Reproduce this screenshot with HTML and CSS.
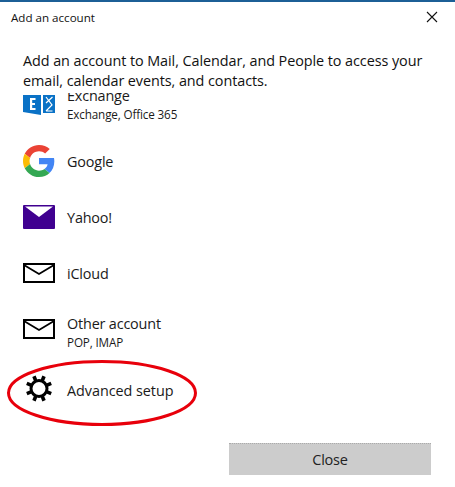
FILE: index.html
```html
<!DOCTYPE html>
<html lang="en">
<head>
<meta charset="utf-8">
<title>Add an account</title>
<link rel="stylesheet" href="styles.css">
</head>
<body>
<div class="dialog">
  <header class="titlebar">
    <span class="title">Add an account</span>
    <svg class="close-x" width="12" height="12" viewBox="0 0 12 12"><path d="M1 1l10 10M11 1L1 11" stroke="#111" stroke-width="1.1" fill="none"/></svg>
  </header>
  <p class="intro">Add an account to Mail, Calendar, and People to access your email, calendar events, and contacts.</p>
  <div class="list">
    <div class="rows">
      <div class="row row-exchange">
        <svg class="icon" width="32" height="32" viewBox="0 0 32 32">
          <path d="M0 6h18v20l-18-3z" fill="#0a72c6"/>
          <path d="M20 6h12v18H20z" fill="#0a72c6"/>
          <path d="M7 9h5.500v2H9.200v3h2.800v2H9.200v3h3.300v2H7z" fill="#fff"/>
          <path d="M23 8l6 8-6 6M29.500 8l-6.500 6M23 22h6.500" stroke="#fff" stroke-width="1.200" fill="none"/>
        </svg>
        <div class="labels"><span class="name">Exchange</span><span class="sub">Exchange, Office 365</span></div>
      </div>
      <div class="row">
        <svg class="icon" width="32" height="32" viewBox="0 0 48 48">
          <path fill="#ea4335" d="M24 9.500c3.500 0 6.700 1.300 9.200 3.400l6.900-6.900C35.900 2.200 30.300 0 24 0 14.600 0 6.500 5.400 2.600 13.200l8 6.200C12.500 13.600 17.800 9.500 24 9.500z"/>
          <path fill="#4285f4" d="M47 24.500c0-1.600-.2-3.300-.5-4.900H24v9.300h12.900c-.6 3-2.300 5.500-4.800 7.200l7.700 6C44.300 37.900 47 31.800 47 24.500z"/>
          <path fill="#fbbc05" d="M10.600 28.600C10.100 27.100 9.800 25.600 9.800 24s.3-3.100.8-4.600l-8-6.200C.9 16.500 0 20.100 0 24s.9 7.500 2.600 10.800z"/>
          <path fill="#34a853" d="M24 48c6.500 0 11.900-2.100 15.800-5.900l-7.700-6c-2.100 1.500-4.900 2.400-8.100 2.400-6.200 0-11.500-4.100-13.400-9.900l-8 6.200C6.500 42.600 14.600 48 24 48z"/>
        </svg>
        <div class="labels"><span class="name">Google</span></div>
      </div>
      <div class="row">
        <svg class="icon" width="32" height="32" viewBox="0 0 32 32">
          <rect x="0" y="4" width="32" height="24" rx="1" fill="#400090"/>
          <path d="M2 5.500h28L16 16z" fill="#fff"/>
        </svg>
        <div class="labels"><span class="name">Yahoo!</span></div>
      </div>
      <div class="row">
        <svg class="icon" width="32" height="32" viewBox="0 0 32 32">
          <rect x="1" y="7" width="30" height="18" fill="none" stroke="#000" stroke-width="2"/>
          <path d="M1 8l15 9 15-9" fill="none" stroke="#000" stroke-width="1.800"/>
        </svg>
        <div class="labels"><span class="name">iCloud</span></div>
      </div>
      <div class="row row-other">
        <svg class="icon" width="32" height="32" viewBox="0 0 32 32">
          <rect x="1" y="7" width="30" height="18" fill="none" stroke="#000" stroke-width="2"/>
          <path d="M1 8l15 9 15-9" fill="none" stroke="#000" stroke-width="1.800"/>
        </svg>
        <div class="labels"><span class="name">Other account</span><span class="sub">POP, IMAP</span></div>
      </div>
      <div class="row row-adv">
        <svg class="icon" width="32" height="32" viewBox="0 0 32 32">
          <g transform="translate(16 14.500)">
            <circle r="8" fill="none" stroke="#000" stroke-width="3"/>
            <g fill="#000">
              <rect x="-1.800" y="-13.200" width="3.600" height="4.500" transform="rotate(22.500)"/>
              <rect x="-1.800" y="-13.200" width="3.600" height="4.500" transform="rotate(67.500)"/>
              <rect x="-1.800" y="-13.200" width="3.600" height="4.500" transform="rotate(112.500)"/>
              <rect x="-1.800" y="-13.200" width="3.600" height="4.500" transform="rotate(157.500)"/>
              <rect x="-1.800" y="-13.200" width="3.600" height="4.500" transform="rotate(202.500)"/>
              <rect x="-1.800" y="-13.200" width="3.600" height="4.500" transform="rotate(247.500)"/>
              <rect x="-1.800" y="-13.200" width="3.600" height="4.500" transform="rotate(292.500)"/>
              <rect x="-1.800" y="-13.200" width="3.600" height="4.500" transform="rotate(337.500)"/>
            </g>
          </g>
        </svg>
        <div class="labels"><span class="name name-adv">Advanced setup</span></div>
      </div>
    </div>
  </div>
  <footer class="actions"><button class="close-btn" type="button">Close</button></footer>
  <svg class="mark" width="455" height="487" viewBox="0 0 455 487"><ellipse cx="102" cy="393" rx="93.500" ry="31.500" fill="none" stroke="#e8000b" stroke-width="3"/></svg>
</div>
</body>
</html>
```
FILE: styles.css
```css
* { box-sizing: border-box; }
html, body { margin: 0; padding: 0; background: #fff; }
body { font-family: "Open Sans", "Noto Sans", sans-serif; color: #1a1a1a; overflow: hidden; }
.dialog { position: relative; width: 455px; height: 487px; border-top: 2px solid #1c5f96; display: flex; flex-direction: column; }
.titlebar { display: flex; align-items: center; justify-content: space-between; height: 30px; padding: 0 17px 0 11px; }
.title { font-size: 11.6px; color: #111; }
.close-x { display: block; }
.intro { margin: 19px 20px 0 23px; font-size: 14.4px; line-height: 20px; color: #111; letter-spacing: -0.07px; height: 42px; }
.list { height: 325px; overflow: hidden; }
.rows { margin-top: -16px; padding-left: 23px; }
.row { display: flex; align-items: center; gap: 12px; height: 56px; }
.row-exchange .labels { padding-bottom: 3px; }
.row-other .labels { padding-top: 5px; }
.row-adv { margin-top: 5px; }
.icon { display: block; flex: none; }
.labels { display: flex; flex-direction: column; }
.name { font-size: 14.4px; line-height: 19px; color: #1a1a1a; letter-spacing: -0.17px; }
.name-adv { letter-spacing: -0.05px; }
.sub { margin-top: 1px; font-size: 11.7px; line-height: 16px; color: #1a1a1a; letter-spacing: -0.15px; }
.actions { display: flex; justify-content: flex-end; padding: 0 24px 0 0; margin-top: 25px; }
.close-btn { width: 202px; height: 32px; background: #ccc; border: 0; border-top: 1px dotted #aaa; font: 14.5px "Open Sans", "Noto Sans", sans-serif; color: #222; padding: 0; letter-spacing: -0.2px; }
.mark { position: absolute; left: 0; top: -2px; pointer-events: none; }
```
